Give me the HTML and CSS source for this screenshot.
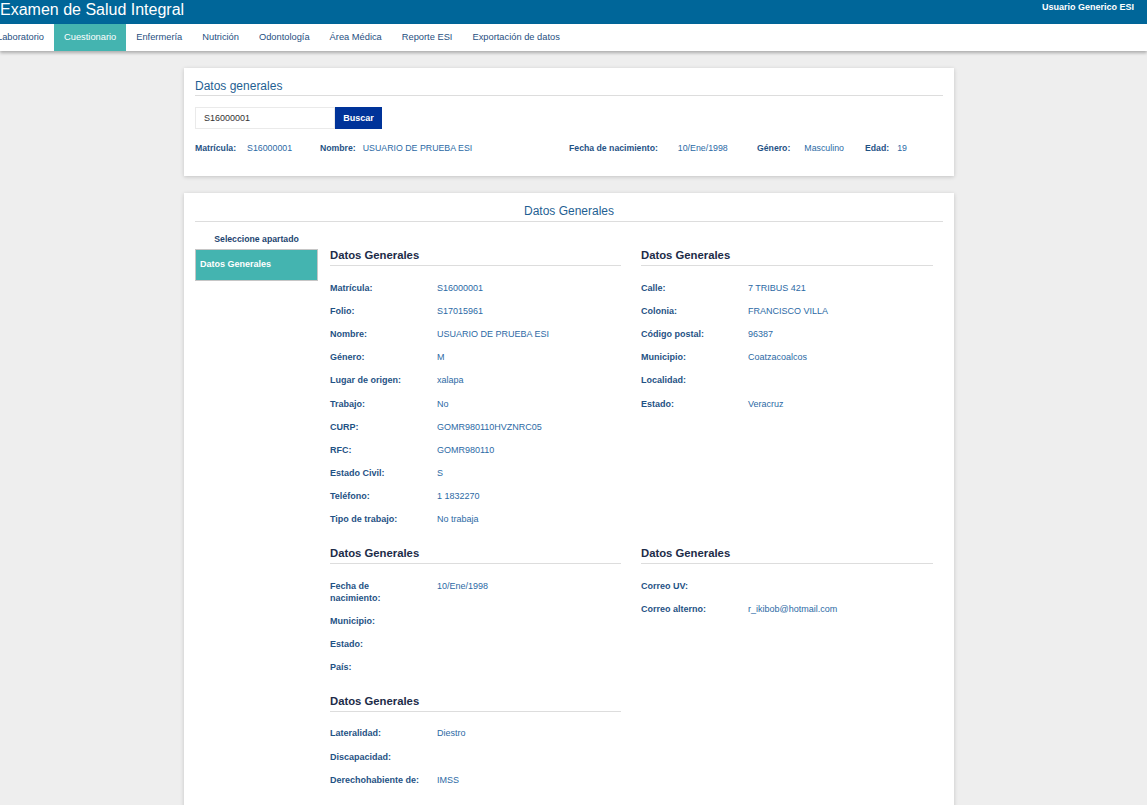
FILE: index.html
```html
<!DOCTYPE html>
<html lang="es">
<head>
<meta charset="utf-8">
<title>Examen de Salud Integral</title>
<link rel="stylesheet" href="styles.css">
</head>
<body>
<header class="topbar">
  <div class="brand">Examen de Salud Integral</div>
  <div class="user">Usuario Generico ESI</div>
</header>
<nav class="navbar">
  <ul class="tabs">
    <li class="tab">Laboratorio</li>
    <li class="tab active">Cuestionario</li>
    <li class="tab">Enfermería</li>
    <li class="tab">Nutrición</li>
    <li class="tab">Odontología</li>
    <li class="tab">Área Médica</li>
    <li class="tab">Reporte ESI</li>
    <li class="tab">Exportación de datos</li>
  </ul>
</nav>
<main class="main">
  <section class="card card-search">
    <h2 class="card-title">Datos generales</h2>
    <div class="search">
      <input class="search-input" type="text" value="S16000001">
      <button class="btn">Buscar</button>
    </div>
    <div class="info">
      <div class="info-item w1"><span class="ilabel">Matrícula:</span><span class="ival g1">S16000001</span></div>
      <div class="info-item w2"><span class="ilabel">Nombre:</span><span class="ival g2">USUARIO DE PRUEBA ESI</span></div>
      <div class="info-item w3"><span class="ilabel">Fecha de nacimiento:</span><span class="ival g3">10/Ene/1998</span></div>
      <div class="info-item w4"><span class="ilabel">Género:</span><span class="ival g4">Masculino</span></div>
      <div class="info-item"><span class="ilabel">Edad:</span><span class="ival g5">19</span></div>
    </div>
  </section>

  <section class="card card-detail">
    <h2 class="card-title centered">Datos Generales</h2>
    <div class="detail">
      <aside class="sidebar">
        <div class="side-caption">Seleccione apartado</div>
        <div class="side-item">Datos Generales</div>
      </aside>
      <div class="sections">
        <div class="block">
          <h3 class="block-title">Datos Generales</h3>
          <dl class="rows">
            <div class="row"><dt>Matrícula:</dt><dd>S16000001</dd></div>
            <div class="row"><dt>Folio:</dt><dd>S17015961</dd></div>
            <div class="row"><dt>Nombre:</dt><dd>USUARIO DE PRUEBA ESI</dd></div>
            <div class="row"><dt>Género:</dt><dd>M</dd></div>
            <div class="row"><dt>Lugar de origen:</dt><dd>xalapa</dd></div>
            <div class="row"><dt>Trabajo:</dt><dd>No</dd></div>
            <div class="row"><dt>CURP:</dt><dd>GOMR980110HVZNRC05</dd></div>
            <div class="row"><dt>RFC:</dt><dd>GOMR980110</dd></div>
            <div class="row"><dt>Estado Civil:</dt><dd>S</dd></div>
            <div class="row"><dt>Teléfono:</dt><dd>1 1832270</dd></div>
            <div class="row"><dt>Tipo de trabajo:</dt><dd>No trabaja</dd></div>
          </dl>
        </div>
        <div class="block">
          <h3 class="block-title">Datos Generales</h3>
          <dl class="rows">
            <div class="row"><dt>Calle:</dt><dd>7 TRIBUS 421</dd></div>
            <div class="row"><dt>Colonia:</dt><dd>FRANCISCO VILLA</dd></div>
            <div class="row"><dt>Código postal:</dt><dd>96387</dd></div>
            <div class="row"><dt>Municipio:</dt><dd>Coatzacoalcos</dd></div>
            <div class="row"><dt>Localidad:</dt><dd></dd></div>
            <div class="row"><dt>Estado:</dt><dd>Veracruz</dd></div>
          </dl>
        </div>
        <div class="block">
          <h3 class="block-title">Datos Generales</h3>
          <dl class="rows">
            <div class="row"><dt>Fecha de nacimiento:</dt><dd>10/Ene/1998</dd></div>
            <div class="row"><dt>Municipio:</dt><dd></dd></div>
            <div class="row"><dt>Estado:</dt><dd></dd></div>
            <div class="row"><dt>País:</dt><dd></dd></div>
          </dl>
        </div>
        <div class="block">
          <h3 class="block-title">Datos Generales</h3>
          <dl class="rows">
            <div class="row"><dt>Correo UV:</dt><dd></dd></div>
            <div class="row"><dt>Correo alterno:</dt><dd>r_ikibob@hotmail.com</dd></div>
          </dl>
        </div>
        <div class="block">
          <h3 class="block-title">Datos Generales</h3>
          <dl class="rows">
            <div class="row"><dt>Lateralidad:</dt><dd>Diestro</dd></div>
            <div class="row"><dt>Discapacidad:</dt><dd></dd></div>
            <div class="row"><dt>Derechohabiente de:</dt><dd>IMSS</dd></div>
          </dl>
        </div>
      </div>
    </div>
  </section>
</main>
</body>
</html>
```

FILE: styles.css
```css
* { box-sizing: border-box; }

html, body {
  margin: 0;
  padding: 0;
  background: #eeeeee;
  font-family: "Liberation Sans", Arial, sans-serif;
  overflow: hidden;
}

.topbar {
  height: 24px;
  background: #006699;
  color: #ffffff;
  display: flex;
  justify-content: space-between;
  align-items: flex-start;
}

.brand {
  font-size: 16px;
  line-height: 20px;
}

.user {
  font-size: 9px;
  font-weight: bold;
  line-height: 12px;
  padding-top: 1px;
  margin-right: 13px;
}

.navbar {
  height: 27px;
  background: #ffffff;
  box-shadow: 0 2px 3px rgba(0, 0, 0, 0.28);
  position: relative;
  z-index: 1;
}

.tabs {
  list-style: none;
  margin: 0 0 0 -13px;
  padding: 0;
  display: flex;
  height: 27px;
}

.tab {
  font-size: 9.3px;
  line-height: 27px;
  padding: 0 10px;
  color: #1f4f7f;
}

.tab.active {
  background: #44b4b0;
  color: #ffffff;
}

.main {
  width: 770px;
  margin-left: 184px;
  padding-top: 17px;
}

.card {
  background: #ffffff;
  box-shadow: 0 1px 4px rgba(0, 0, 0, 0.18);
  padding: 10px 11px 23px;
}

.card-search {
  padding-bottom: 22px;
}

.card-detail {
  margin-top: 17px;
  padding-top: 10px;
  padding-bottom: 40px;
}

.card-title {
  margin: 0;
  font-size: 12px;
  font-weight: normal;
  line-height: 16px;
  color: #1f5f93;
  padding-bottom: 1px;
  border-bottom: 1px solid #dddddd;
}

.card-title.centered {
  text-align: center;
  padding-bottom: 2px;
}

.search {
  display: flex;
  margin-top: 11px;
  height: 22px;
}

.search-input {
  width: 140px;
  height: 22px;
  border: 1px solid #eaeaea;
  padding: 0 8px;
  font-family: "Liberation Sans", Arial, sans-serif;
  font-size: 9px;
  color: #333333;
  outline: none;
}

.btn {
  width: 47px;
  height: 22px;
  border: none;
  background: #003399;
  color: #ffffff;
  font-family: "Liberation Sans", Arial, sans-serif;
  font-size: 9px;
  font-weight: bold;
  padding: 0;
}

.info {
  display: flex;
  margin-top: 13px;
  font-size: 9px;
  line-height: 12px;
}

.info-item { display: flex; }
.w1 { width: 125px; }
.w2 { width: 249px; }
.w3 { width: 188px; }
.w4 { width: 108px; }

.ilabel {
  font-weight: bold;
  font-size: 8.7px;
  color: #1f5285;
}

.ival { color: #2c6aa5; font-size: 8.8px; }
.g1 { margin-left: 11px; }
.g2 { margin-left: 7px; }
.g3 { margin-left: 20px; }
.g4 { margin-left: 14px; }
.g5 { margin-left: 8px; }

.detail {
  display: flex;
  gap: 12px;
  margin-top: 11px;
}

.sidebar {
  width: 123px;
  flex: none;
}

.side-caption {
  text-align: center;
  font-size: 8.7px;
  font-weight: bold;
  line-height: 12px;
  color: #1d4570;
}

.side-item {
  margin-top: 4px;
  height: 32px;
  background: #44b4b0;
  border: 1px solid #c6c6c6;
  color: #ffffff;
  font-size: 9px;
  font-weight: bold;
  line-height: 29px;
  padding-left: 4px;
}

.sections {
  flex: 1;
  display: grid;
  grid-template-columns: 291px 292px;
  column-gap: 20px;
  align-items: start;
  padding-top: 6px;
}

.block {
  padding-top: 9px;
  margin-bottom: 6px;
}

.block-title {
  margin: 0;
  font-size: 11.3px;
  font-weight: bold;
  line-height: 14px;
  color: #1c2b48;
  padding-bottom: 3px;
  border-bottom: 1px solid #dddddd;
}

.rows {
  margin: 10px 0 0;
}

.row {
  display: flex;
  padding: 5.6px 0;
  font-size: 9px;
  line-height: 12px;
}

.row dt {
  width: 107px;
  padding-right: 17px;
  font-weight: bold;
  color: #1f5285;
  flex: none;
}

.row dd {
  margin: 0;
  color: #2c6aa5;
}
```
